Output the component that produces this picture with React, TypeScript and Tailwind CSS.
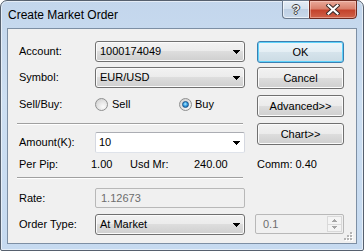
import React from "react";

const grayGrad =
  "bg-[linear-gradient(to_bottom,#f2f2f2_0%,#ebebeb_50%,#dddddd_50%,#cfcfcf_100%)]";

function Arrow({ color = "#000" }: { color?: string }) {
  return (
    <svg width="7" height="4" viewBox="0 0 7 4" className="shrink-0" shapeRendering="crispEdges">
      <path d="M0 0h7v1h-1v1h-1v1h-1v1h-1v-1h-1v-1h-1v-1h-1z" fill={color} />
    </svg>
  );
}

function SmallArrow({ up }: { up?: boolean }) {
  return (
    <svg width="5" height="3" viewBox="0 0 5 3" shapeRendering="crispEdges">
      {up ? (
        <path d="M2 0h1v1h1v1h1v1h-5v-1h1v-1h1z" fill="#a3a3a3" />
      ) : (
        <path d="M0 0h5v1h-1v1h-1v1h-1v-1h-1v-1h-1z" fill="#a3a3a3" />
      )}
    </svg>
  );
}

function Combo({ value }: { value: string }) {
  return (
    <div
      className={`h-[21px] w-[150px] rounded-[3px] border border-[#707070] ${grayGrad} shadow-[inset_0_0_0_1px_#fbfbfb] flex items-center pl-[4px] pr-[4px]`}
    >
      <span className="flex-1 leading-[13px]">{value}</span>
      <Arrow />
    </div>
  );
}

function Button({ label, def }: { label: string; def?: boolean }) {
  if (def) {
    return (
      <div className="h-[22px] w-[87px] rounded-[3px] border border-[#3c7fb1] shadow-[inset_0_0_0_1px_#5fd3fb] bg-[linear-gradient(to_bottom,#eef6fa_0%,#e4eef4_50%,#d6e4ec_50%,#cbdbe4_100%)] flex items-center justify-center leading-[13px]">
        {label}
      </div>
    );
  }
  return (
    <div
      className={`h-[22px] w-[87px] rounded-[3px] border border-[#707070] ${grayGrad} shadow-[inset_0_0_0_1px_#fbfbfb] flex items-center justify-center leading-[13px]`}
    >
      {label}
    </div>
  );
}

function Radio({ checked }: { checked?: boolean }) {
  return (
    <span className="w-[13px] h-[13px] rounded-full border border-[#8e8f8f] bg-[radial-gradient(circle_at_65%_70%,#fbfbfb_0%,#e6e6e6_45%,#c9c9c9_100%)] flex items-center justify-center shrink-0">
      {checked && (
        <span className="w-[7px] h-[7px] rounded-full border border-[#19528a] bg-[radial-gradient(circle_at_45%_40%,#b6ecff_0%,#3aa3e6_45%,#0d5a9e_100%)]" />
      )}
    </span>
  );
}

function Label({ children }: { children: React.ReactNode }) {
  return <span className="w-[76px] shrink-0 leading-[13px]">{children}</span>;
}

function Separator() {
  return (
    <div className="-ml-[2px] w-[226px] h-[2px] flex flex-col">
      <div className="h-[1px] bg-[#a0a0a0]" />
      <div className="h-[1px] bg-white" />
    </div>
  );
}

function Grip() {
  const dots = [
    [6, 0],
    [3, 3],
    [6, 3],
    [0, 6],
    [3, 6],
    [6, 6],
  ];
  return (
    <svg width="9" height="9" viewBox="0 0 9 9" shapeRendering="crispEdges">
      {dots.map(([x, y], i) => (
        <g key={i}>
          <rect x={x + 1} y={y + 1} width="2" height="2" fill="#ffffff" />
          <rect x={x} y={y} width="2" height="2" fill="#b4b4b4" />
        </g>
      ))}
    </svg>
  );
}

export default function App() {
  return (
    <div className="w-[364px] h-[251px] font-['Liberation_Sans',Arial,sans-serif] text-[11px] text-black">
      <div className="w-[364px] h-[251px] rounded-t-[7px] rounded-b-[2px] border border-[#56606e] bg-[linear-gradient(to_bottom,#c3d6ec_0%,#cddff2_40%,#c6daf0_100%)] shadow-[inset_0_0_0_1px_rgba(255,255,255,0.55)] flex flex-col">
        {/* Title bar */}
        <div className="h-[27px] flex items-start">
          <div className="pl-[7px] pt-[7px] text-[12px] leading-[14px] text-black">
            Create Market Order
          </div>
          <div className="ml-auto mr-[6px] -mt-[1px] flex">
            <div className="w-[27px] h-[19px] rounded-bl-[4px] border border-[#6b7a8d] border-r-0 bg-[linear-gradient(to_bottom,#e3ecf6_0%,#d3e0ee_50%,#bfd0e4_50%,#c9d9eb_100%)] shadow-[inset_0_0_0_1px_rgba(255,255,255,0.6)] flex items-center justify-center">
              <span className="text-[13px] font-bold leading-[13px] text-[#f4f4f4] [text-shadow:1px_0_#3d3d3d,-1px_0_#3d3d3d,0_1px_#3d3d3d,0_-1px_#3d3d3d]">
                ?
              </span>
            </div>
            <div className="w-[48px] h-[19px] rounded-br-[4px] border border-[#6d2a20] bg-[linear-gradient(to_bottom,#e9a99a_0%,#d9806c_45%,#c4432c_55%,#d0634a_100%)] shadow-[inset_0_0_0_1px_rgba(255,220,210,0.45)] flex items-center justify-center">
              <svg width="14" height="11" viewBox="0 0 14 11">
                <path d="M2.5 1.5 L11.5 9.5 M11.5 1.5 L2.5 9.5" stroke="#3b2a28" strokeWidth="4.2" strokeLinecap="square" />
                <path d="M2.5 1.5 L11.5 9.5 M11.5 1.5 L2.5 9.5" stroke="#ffffff" strokeWidth="2.2" strokeLinecap="square" />
              </svg>
            </div>
          </div>
        </div>

        {/* Client area */}
        <div className="relative mx-[6px] mb-[6px] flex-1 border border-[#7d8fa4] bg-[#f0f0f0] pl-[11px] pt-[12px] flex flex-col">
          {/* Top section */}
          <div className="flex">
            <div className="w-[226px] flex flex-col">
              <div className="h-[21px] flex items-center">
                <Label>Account:</Label>
                <Combo value="1000174049" />
              </div>
              <div className="mt-[5px] h-[21px] flex items-center">
                <Label>Symbol:</Label>
                <Combo value="EUR/USD" />
              </div>
              <div className="mt-[6px] h-[21px] flex items-center">
                <Label>Sell/Buy:</Label>
                <div className="w-[84px] flex items-center gap-[4px]">
                  <Radio />
                  <span className="leading-[13px]">Sell</span>
                </div>
                <div className="flex items-center gap-[3px]">
                  <Radio checked />
                  <span className="leading-[13px]">Buy</span>
                </div>
              </div>
              <div className="mt-[8px]">
                <Separator />
              </div>
              <div className="mt-[7px] h-[21px] flex items-center">
                <Label>Amount(K):</Label>
                <div className="h-[21px] w-[150px] rounded-[2px] border border-[#abadb3] border-l-[#d5d8e0] border-r-[#d5d8e0] border-b-[#dfe3ea] bg-white flex items-center pl-[3px] pr-[4px]">
                  <span className="flex-1 leading-[13px]">10</span>
                  <Arrow />
                </div>
              </div>
            </div>
            <div className="ml-[12px] w-[87px] flex flex-col">
              <Button label="OK" def />
              <div className="mt-[4px]">
                <Button label="Cancel" />
              </div>
              <div className="mt-[6px]">
                <Button label="Advanced>>" />
              </div>
              <div className="mt-[6px]">
                <Button label="Chart>>" />
              </div>
            </div>
          </div>

          {/* Per pip row */}
          <div className="mt-[1px] h-[21px] flex items-center leading-[13px]">
            <span className="w-[72px]">Per Pip:</span>
            <span className="w-[39px]">1.00</span>
            <span className="w-[64px]">Usd Mr:</span>
            <span className="w-[63px]">240.00</span>
            <span>Comm: 0.40</span>
          </div>

          <div className="mt-[2px]">
            <Separator />
          </div>

          {/* Rate */}
          <div className="mt-[9px] h-[20px] flex items-center">
            <Label>Rate:</Label>
            <div className="h-[20px] w-[150px] rounded-[2px] border border-[#b8b8b8] bg-[#f0f0f0] flex items-center pl-[5px]">
              <span className="leading-[13px] text-[#6d6d6d]">1.12673</span>
            </div>
          </div>

          {/* Order type */}
          <div className="mt-[6px] h-[21px] flex items-center">
            <Label>Order Type:</Label>
            <Combo value="At Market" />
            <div className="ml-[10px] self-start h-[20px] w-[89px] rounded-[2px] border border-[#b8b8b8] bg-[#f0f0f0] flex">
              <span className="flex-1 pl-[7px] leading-[18px] text-[#6d6d6d]">0.1</span>
              <div className="w-[16px] flex flex-col py-[1px] pr-[1px] gap-0">
                <div className="flex-1 border border-[#d9d9d9] bg-[#f4f4f4] flex items-center justify-center">
                  <SmallArrow up />
                </div>
                <div className="flex-1 border border-[#d9d9d9] border-t-0 bg-[#f4f4f4] flex items-center justify-center">
                  <SmallArrow />
                </div>
              </div>
            </div>
          </div>

          <div className="absolute right-[3px] bottom-[2px]">
            <Grip />
          </div>
        </div>
      </div>
    </div>
  );
}
